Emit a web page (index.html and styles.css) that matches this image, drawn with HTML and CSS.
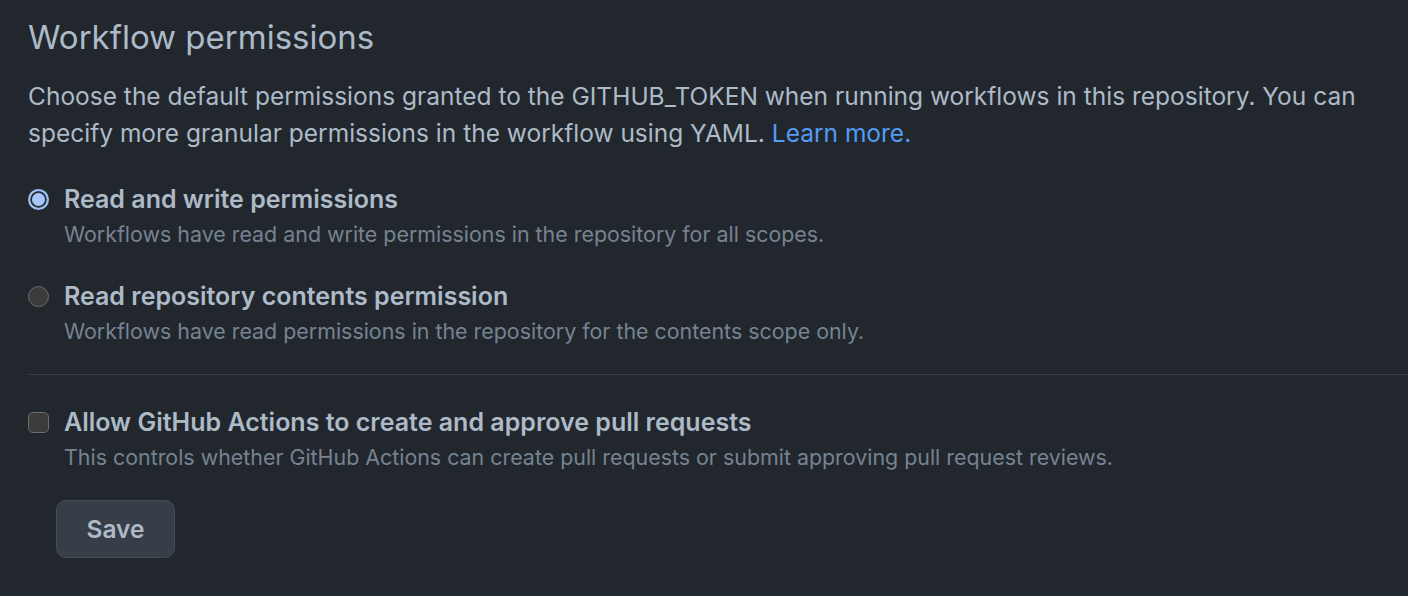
FILE: index.html
```html
<!DOCTYPE html>
<html lang="en">
<head>
<meta charset="utf-8">
<title>Workflow permissions</title>
<link rel="stylesheet" href="styles.css">
</head>
<body>
<main class="page">
  <h2 class="title">Workflow permissions</h2>
  <p class="intro">Choose the default permissions granted to the GITHUB_TOKEN when running workflows in this repository. You can specify more granular permissions in the workflow using YAML. <a class="link" href="#">Learn more.</a></p>

  <div class="option">
    <span class="radio radio-checked"></span>
    <div class="option-text">
      <div class="option-label">Read and write permissions</div>
      <div class="option-note">Workflows have read and write permissions in the repository for all scopes.</div>
    </div>
  </div>

  <div class="option">
    <span class="radio"></span>
    <div class="option-text">
      <div class="option-label">Read repository contents permission</div>
      <div class="option-note">Workflows have read permissions in the repository for the contents scope only.</div>
    </div>
  </div>

  <hr class="divider">

  <div class="option option-check">
    <span class="checkbox"></span>
    <div class="option-text">
      <div class="option-label">Allow GitHub Actions to create and approve pull requests</div>
      <div class="option-note">This controls whether GitHub Actions can create pull requests or submit approving pull request reviews.</div>
    </div>
  </div>

  <button class="btn" type="button">Save</button>
</main>
</body>
</html>
```

FILE: styles.css
```css
html, body {
  margin: 0;
  padding: 0;
  background: #22272e;
}

body {
  font-family: Inter, "Noto Sans", "Liberation Sans", sans-serif;
  color: #adbac7;
  overflow: hidden;
}

.page {
  padding: 11px 0 0 28px;
  display: flex;
  flex-direction: column;
  align-items: flex-start;
}

.title {
  margin: 0;
  font-size: 33px;
  font-weight: 400;
  line-height: 52px;
  color: #adbac7;
}

.intro {
  margin: 15px 0 0 0;
  font-size: 24.5px;
  line-height: 37px;
  color: #adbac7;
  padding-right: 20px;
}

.link {
  color: #539bf5;
  text-decoration: none;
}

.option {
  display: flex;
  gap: 15px;
  margin-top: 30px;
}

.option + .option {
  margin-top: 27px;
}

.option-text {
  display: flex;
  flex-direction: column;
}

.option-label {
  font-size: 25px;
  font-weight: 600;
  line-height: 35px;
  color: #adbac7;
}

.option-note {
  font-size: 21.4px;
  line-height: 35px;
  color: #768390;
}

.radio {
  box-sizing: border-box;
  width: 21px;
  height: 21px;
  margin-top: 7px;
  border-radius: 50%;
  flex: none;
  background: #3b3b3c;
  border: 1.5px solid #6d6d6e;
}

.radio-checked {
  background: #a5c8fb;
  border: 2px solid #9dc1f5;
  box-shadow: inset 0 0 0 2px #2d3038;
}

.checkbox {
  box-sizing: border-box;
  width: 21px;
  height: 21px;
  margin-top: 7px;
  border-radius: 5px;
  flex: none;
  background: #3b3b3c;
  border: 1.5px solid #6d6d6e;
}

.divider {
  align-self: stretch;
  margin: 25px 0 0 0;
  border: 0;
  border-top: 1px solid #373e47;
  height: 0;
}

.option-check {
  margin-top: 30px;
}

.btn {
  margin: 25px 0 0 28px;
  box-sizing: border-box;
  width: 119px;
  height: 58px;
  background: #373e47;
  border: 1.5px solid #444c56;
  border-radius: 10px;
  color: #adbac7;
  font-family: inherit;
  font-size: 24.5px;
  font-weight: 600;
  cursor: pointer;
}
```
